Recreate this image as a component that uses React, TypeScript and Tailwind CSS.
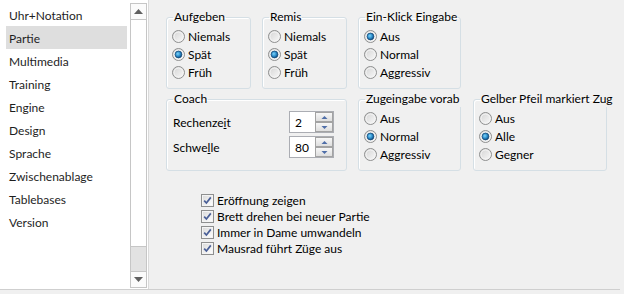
import React from "react";

const pages = [
  "Uhr+Notation",
  "Partie",
  "Multimedia",
  "Training",
  "Engine",
  "Design",
  "Sprache",
  "Zwischenablage",
  "Tablebases",
  "Version",
];

// Windows 7 style radio button
const Radio = ({ label, checked }: { label: string; checked?: boolean }) => (
  <div className="flex h-[18px] items-center gap-[3px]">
    <svg width="13" height="13" viewBox="0 0 13 13" className="shrink-0">
      <defs>
        <linearGradient id="rbg" x1="0" y1="0" x2="1" y2="1">
          <stop offset="0" stopColor="#d2d2d2" />
          <stop offset="1" stopColor="#fbfbfb" />
        </linearGradient>
        <radialGradient id="rdot" cx="0.4" cy="0.4" r="0.6">
          <stop offset="0" stopColor="#7fd3f7" />
          <stop offset="0.6" stopColor="#2a8ccb" />
          <stop offset="1" stopColor="#0f4a7c" />
        </radialGradient>
      </defs>
      <circle cx="6.5" cy="6.5" r="6" fill="url(#rbg)" stroke="#8e8f8f" />
      <circle cx="6.5" cy="6.5" r="4.5" fill="none" stroke="#f4f4f4" strokeWidth="1" />
      {checked && <circle cx="6.5" cy="6.5" r="3.4" fill="url(#rdot)" stroke="#1b4f7e" strokeWidth="0.8" />}
    </svg>
    <span className="whitespace-nowrap pt-[1px]">{label}</span>
  </div>
);

const Check = ({ label }: { label: string }) => (
  <div className="flex h-[16px] items-center gap-[3px]">
    <svg width="13" height="13" viewBox="0 0 13 13" className="shrink-0">
      <defs>
        <linearGradient id="cbg" x1="0" y1="0" x2="1" y2="1">
          <stop offset="0" stopColor="#dcdcdc" />
          <stop offset="1" stopColor="#fdfdfd" />
        </linearGradient>
      </defs>
      <rect x="0.5" y="0.5" width="12" height="12" fill="#f4f4f4" stroke="#8e8f8f" />
      <rect x="2" y="2" width="9" height="9" fill="url(#cbg)" />
      <path d="M3.2 6.6 L5.4 9 L9.8 3.4" fill="none" stroke="#4a5f97" strokeWidth="1.7" />
    </svg>
    <span className="whitespace-nowrap pt-[1px]">{label}</span>
  </div>
);

const Group = ({
  title,
  className,
  children,
}: {
  title: string;
  className: string;
  children: React.ReactNode;
}) => (
  <fieldset
    className={`h-[80px] min-w-0 shrink-0 rounded-[3px] border border-[#d5dfe5] px-[5px] pt-[2px] shadow-[inset_1px_1px_0_#fff] ${className}`}
  >
    <legend className="ml-[1px] whitespace-nowrap px-[1px] leading-[16px]">{title}</legend>
    {children}
  </fieldset>
);

const Spin = ({ value }: { value: string }) => (
  <div className="flex h-[22px] w-[45px] border border-[#abadb3] bg-white">
    <span className="flex w-[25px] items-center pl-[5px] pt-[1px]">{value}</span>
    <div className="flex w-[18px] flex-col">
      {["M2.5 6 L5.5 3 L8.5 6 Z", "M2.5 3 L5.5 6 L8.5 3 Z"].map((d) => (
        <div
          key={d}
          className="flex h-[10px] items-center justify-center border border-[#a3a3a3] bg-gradient-to-b from-[#f7f7f7] to-[#dedede]"
        >
          <svg width="11" height="9" viewBox="0 0 11 9">
            <path d={d} fill="#4f6ea8" />
          </svg>
        </div>
      ))}
    </div>
  </div>
);

const Scrollbar = () => (
  <div className="mb-[1px] mt-[3px] flex w-[17px] shrink-0 flex-col border border-[#c6c6c6]">
    <div className="flex h-[16px] items-center justify-center border-b border-[#c6c6c6] bg-[#fbfbfb]">
      <svg width="9" height="5" viewBox="0 0 9 5">
        <path d="M0 5 L4.5 0 L9 5 Z" fill="#606060" />
      </svg>
    </div>
    <div className="flex-1 border-b border-[#c6c6c6] bg-white" />
    <div className="h-[24px] bg-[#e2e2e2]" />
    <div className="flex h-[16px] items-center justify-center border-t border-[#c6c6c6] bg-[#fbfbfb]">
      <svg width="9" height="5" viewBox="0 0 9 5">
        <path d="M0 0 L4.5 5 L9 0 Z" fill="#606060" />
      </svg>
    </div>
  </div>
);

export default function App() {
  return (
    <div className="h-[294px] w-[624px] overflow-hidden bg-[#f0f0f0] font-['Lato','Noto_Sans',sans-serif] text-[12px] text-black">
      <div className="flex h-[290px] w-[620px] border-b border-[#cfcfcf]">
        <div className="flex w-[149px] shrink-0 border-r border-[#dadada] bg-white">
          <ul className="w-[130px] pl-[6px] pt-[3px] text-[#1e1e1e]">
            {pages.map((p) => (
              <li
                key={p}
                className={`flex h-[23px] w-[121px] items-center pl-[3px] pt-[2px] ${
                  p === "Partie" ? "bg-[#dedede]" : ""
                }`}
              >
                {p}
              </li>
            ))}
          </ul>
          <Scrollbar />
        </div>

        <div className="flex-1 pl-[17px] pt-[9px]">
          <div className="flex">
            <Group title="Aufgeben" className="w-[85px]">
              <Radio label="Niemals" />
              <Radio label="Spät" checked />
              <Radio label="Früh" />
            </Group>
            <Group title="Remis" className="ml-[11px] w-[85px]">
              <Radio label="Niemals" />
              <Radio label="Spät" checked />
              <Radio label="Früh" />
            </Group>
            <Group title="Ein-Klick Eingabe" className="ml-[11px] w-[103px]">
              <Radio label="Aus" checked />
              <Radio label="Normal" />
              <Radio label="Aggressiv" />
            </Group>
          </div>

          <div className="mt-[2px] flex">
            <fieldset className="h-[80px] w-[181px] min-w-0 shrink-0 rounded-[3px] border border-[#d5dfe5] px-[5px] pt-[4px] shadow-[inset_1px_1px_0_#fff]">
              <legend className="ml-[1px] px-[1px] leading-[16px]">Coach</legend>
              <div className="flex flex-col gap-[3px]">
                <div className="flex items-center">
                  <span className="w-[117px] pl-[1px] pt-[1px]">
                    Rechenze<u>i</u>t
                  </span>
                  <Spin value="2" />
                </div>
                <div className="flex items-center">
                  <span className="w-[117px] pl-[1px] pt-[1px]">
                    Schwe<u>l</u>le
                  </span>
                  <Spin value="80" />
                </div>
              </div>
            </fieldset>
            <Group title="Zugeingabe vorab" className="ml-[11px] w-[103px]">
              <Radio label="Aus" />
              <Radio label="Normal" checked />
              <Radio label="Aggressiv" />
            </Group>
            <Group title="Gelber Pfeil markiert Zug" className="ml-[12px] w-[134px]">
              <Radio label="Aus" />
              <Radio label="Alle" checked />
              <Radio label="Gegner" />
            </Group>
          </div>

          <div className="ml-[35px] mt-[21px] flex flex-col">
            <Check label="Eröffnung zeigen" />
            <Check label="Brett drehen bei neuer Partie" />
            <Check label="Immer in Dame umwandeln" />
            <Check label="Mausrad führt Züge aus" />
          </div>
        </div>
      </div>
    </div>
  );
}
